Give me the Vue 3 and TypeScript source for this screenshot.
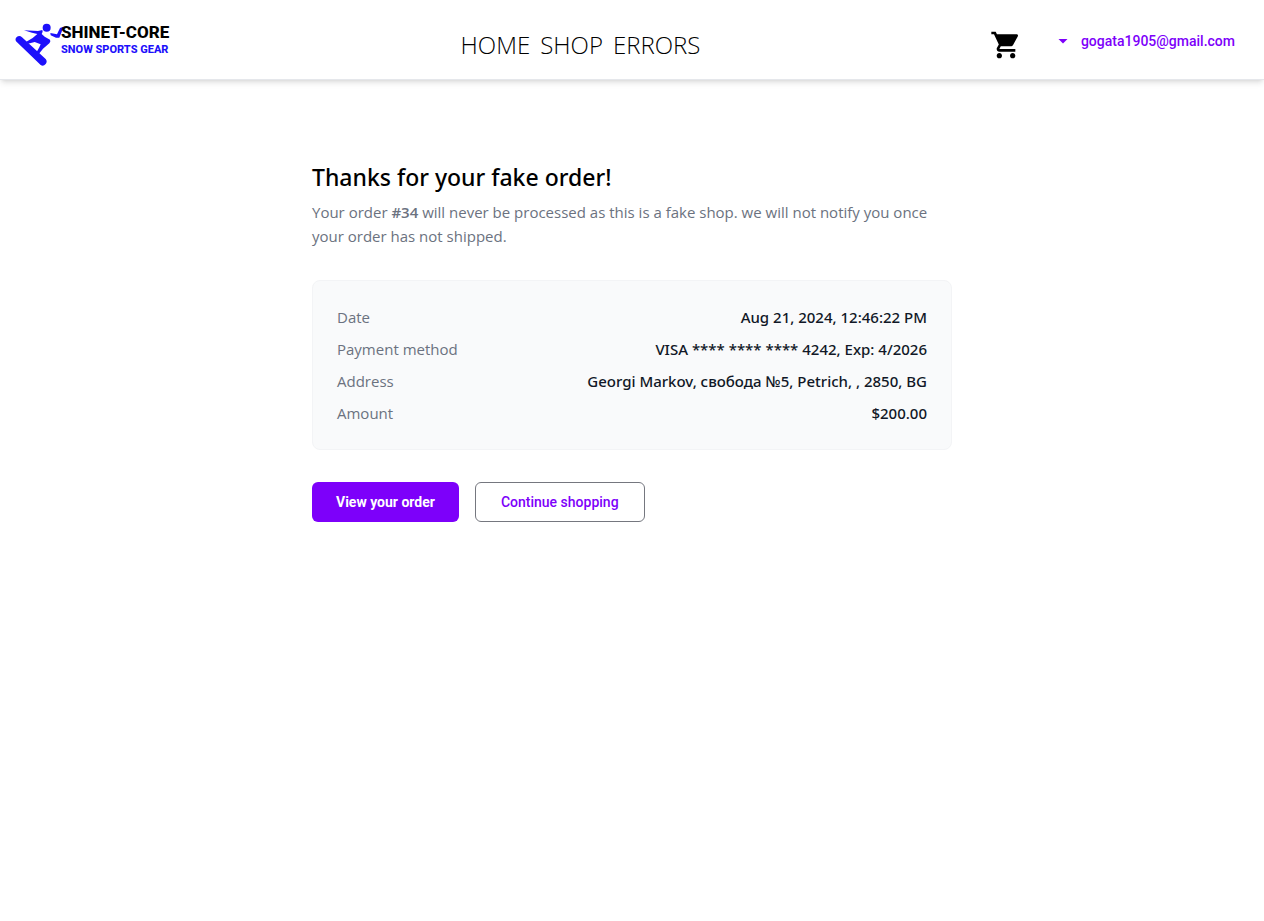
<script setup lang="ts">
interface NavLink {
  label: string
  href: string
}

interface Detail {
  term: string
  value: string
}

const links: NavLink[] = [
  { label: 'Home', href: '#home' },
  { label: 'Shop', href: '#shop' },
  { label: 'Errors', href: '#errors' },
]

const orderId = 34
const email = 'gogata1905@gmail.com'

const details: Detail[] = [
  { term: 'Date', value: 'Aug 21, 2024, 12:46:22 PM' },
  { term: 'Payment method', value: 'VISA **** **** **** 4242, Exp: 4/2026' },
  { term: 'Address', value: 'Georgi Markov, свобода №5, Petrich, , 2850, BG' },
  { term: 'Amount', value: '$200.00' },
]
</script>

<template>
  <header class="topbar">
    <a class="logo" href="#home" aria-label="Shinet-Core home">
      <svg class="rider" viewBox="45 36 147 135" aria-hidden="true">
        <circle cx="140" cy="53" r="12" />
        <path d="M48 94Q44 85 51 80Q59 75 66 82L137 147Q143 155 137 162Q130 170 122 165Z" />
        <path d="M72 61L114 63L127 60Q130 65 125 72L134 80L150 89Q153 94 148 100L129 116L117 131L110 126L118 112L122 103L104 96L84 101L79 95L98 84L112 72L96 68Z" />
        <path d="M151 69L171 73L180 54L190 50L187 60L178 83L168 83L152 76Z" />
      </svg>
      <span class="wordmark">
        <span class="name">SHINET-CORE</span>
        <span class="tagline">SNOW SPORTS GEAR</span>
      </span>
    </a>

    <nav class="nav" aria-label="Main">
      <a v-for="link in links" :key="link.label" :href="link.href">{{ link.label }}</a>
    </nav>

    <div class="account">
      <a class="cart" href="#cart" aria-label="Shopping cart">
        <svg viewBox="0 0 24 24" aria-hidden="true">
          <path d="M7 18c-1.100 0-1.990.9-1.990 2S5.900 22 7 22s2-.9 2-2-.9-2-2-2zM1 2v2h2l3.600 7.590-1.350 2.450c-.16.280-.25.610-.25.960 0 1.100.9 2 2 2h12v-2H7.420c-.14 0-.25-.11-.25-.25l.03-.12.900-1.630h7.450c.75 0 1.410-.41 1.750-1.030l3.580-6.490c.08-.14.120-.31.120-.48 0-.55-.45-1-1-1H5.210l-.94-2H1zm16 16c-1.100 0-1.990.9-1.990 2s.89 2 1.990 2 2-.9 2-2-.9-2-2-2z" />
        </svg>
      </a>
      <button class="user" type="button">
        <svg viewBox="0 0 10 5" aria-hidden="true"><path d="M0.500 0H9.500L5 4.500Z" /></svg>
        <span>{{ email }}</span>
      </button>
    </div>
  </header>

  <main class="page">
    <h1>Thanks for your fake order!</h1>
    <p class="intro">
      Your order <strong>#{{ orderId }}</strong> will never be processed as this is a fake shop. we
      will not notify you once your order has not shipped.
    </p>

    <dl class="details">
      <div v-for="item in details" :key="item.term" class="row">
        <dt>{{ item.term }}</dt>
        <dd>{{ item.value }}</dd>
      </div>
    </dl>

    <div class="actions">
      <button class="btn primary" type="button">View your order</button>
      <button class="btn outline" type="button">Continue shopping</button>
    </div>
  </main>
</template>

<style>
body {
  margin: 0;
  background: #fff;
}
</style>

<style scoped>
.topbar {
  display: grid;
  grid-template-columns: 1fr auto 1fr;
  align-items: start;
  box-sizing: border-box;
  min-height: 80px;
  padding: 22px 16px 0 15px;
  border-bottom: 1px solid #e5e7eb;
  box-shadow: 0 4px 6px -1px rgba(0, 0, 0, 0.1), 0 2px 4px -2px rgba(0, 0, 0, 0.1);
  font-family: "Open Sans", "Noto Sans", sans-serif;
}

.logo {
  display: flex;
  color: #000;
  text-decoration: none;
}

.rider {
  width: 49px;
  height: 45px;
  margin-right: -3px;
  fill: #1d10fb;
}

.wordmark {
  display: flex;
  flex-direction: column;
  font-family: Roboto, sans-serif;
  font-weight: 800;
  white-space: nowrap;
}

.name {
  font-size: 17px;
  line-height: 21px;
}

.tagline {
  color: #1d10fb;
  font-size: 11px;
  line-height: 14px;
}

.nav {
  display: flex;
  gap: 10px;
  padding-right: 102px;
}

.nav a {
  color: #000;
  font-size: 24px;
  font-weight: 300;
  line-height: 46px;
  text-decoration: none;
  text-transform: uppercase;
}

.account {
  display: flex;
  justify-content: flex-end;
  gap: 24px;
}

.cart {
  display: block;
  height: 32px;
  margin-top: 7px;
}

.cart svg {
  width: 32px;
  height: 32px;
  fill: #000;
}

.user {
  display: flex;
  align-items: center;
  gap: 13px;
  height: 38px;
  padding: 0 13px 0 12px;
  border: 0;
  background: none;
  color: #7d00fa;
  font: 500 14px/20px Roboto, sans-serif;
}

.user svg {
  width: 10px;
  height: 5px;
  fill: currentColor;
}

.page {
  box-sizing: border-box;
  max-width: 640px;
  margin: 80px auto 0;
  font-family: "Open Sans", "Noto Sans", sans-serif;
  font-size: 15px;
  line-height: 24px;
}

h1 {
  margin: 0 0 6px;
  color: #000;
  font-family: "Noto Sans", sans-serif;
  font-size: 23px;
  font-weight: 500;
  line-height: 34px;
}

.intro {
  margin: 0 0 32px;
  color: #6b7280;
}

.intro strong {
  font-weight: 600;
}

.details {
  display: flex;
  flex-direction: column;
  gap: 8px;
  margin: 0 0 32px;
  padding: 24px;
  border: 1px solid #f3f4f6;
  border-radius: 8px;
  background: #f9fafb;
}

.row {
  display: flex;
  justify-content: space-between;
  gap: 16px;
}

dt {
  color: #6b7280;
}

dd {
  margin: 0;
  color: #111827;
  font-family: "Noto Sans", sans-serif;
  font-weight: 500;
  text-align: right;
}

.actions {
  display: flex;
  gap: 16px;
}

.btn {
  height: 40px;
  padding: 0 25px;
  border: 1px solid #75777f;
  border-radius: 6px;
  background: #fff;
  color: #7d00fa;
  font: 500 14px/20px Roboto, sans-serif;
}

.primary {
  padding: 0 24px;
  border: 0;
  background: #7d00fa;
  color: #fff;
  font-weight: 700;
}
</style>
